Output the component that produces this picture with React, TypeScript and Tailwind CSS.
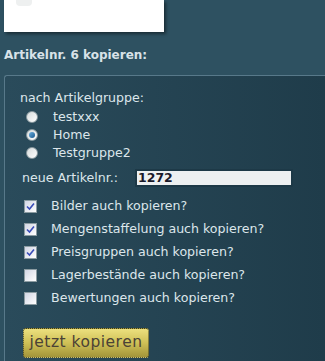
import React from "react";

const groups = [
  { label: "testxxx", checked: false },
  { label: "Home", checked: true },
  { label: "Testgruppe2", checked: false },
];

const options = [
  { label: "Bilder auch kopieren?", checked: true },
  { label: "Mengenstaffelung auch kopieren?", checked: true },
  { label: "Preisgruppen auch kopieren?", checked: true },
  { label: "Lagerbestände auch kopieren?", checked: false },
  { label: "Bewertungen auch kopieren?", checked: false },
];

function Radio({ checked }: { checked: boolean }) {
  return (
    <span className="flex h-[12px] w-[12px] items-center justify-center rounded-full border border-[#8a9aa0] bg-gradient-to-br from-[#d6dbdc] to-[#ffffff]">
      {checked && (
        <span className="h-[6px] w-[6px] rounded-full bg-gradient-to-br from-[#6ab0e0] to-[#1a5a90]" />
      )}
    </span>
  );
}

function Check({ checked }: { checked: boolean }) {
  return (
    <span className="flex h-[13px] w-[13px] items-center justify-center border border-[#8c9ca2] bg-gradient-to-br from-[#d2d6e4] to-[#ffffff]">
      {checked && (
        <svg width="9" height="9" viewBox="0 0 9 9">
          <path d="M1 4.5 L3.5 7 L8 1.5" fill="none" stroke="#3a4cb8" strokeWidth="1.6" />
        </svg>
      )}
    </span>
  );
}

export default function App() {
  return (
    <div
      className="h-[361px] w-[325px] overflow-hidden bg-[#2e5161] text-[#dce6eb]"
      style={{ fontFamily: '"DejaVu Sans", Verdana, sans-serif' }}
    >
      {/* Bildvorschau oben */}
      <div className="ml-[4px] h-[32px] w-[160px] bg-white shadow-[2px_2px_3px_rgba(0,0,0,0.45)]">
        <div className="ml-[12px] h-[6px] w-[16px] rounded-b bg-[#eef0f0]" />
      </div>

      <h2 className="ml-[4px] mt-[16px] text-[12px] font-bold leading-[14px] text-[#d8e2e8]">
        Artikelnr. 6 kopieren:
      </h2>

      <div className="ml-[4px] mt-[13px] h-[300px] rounded-tl-[3px] border-l border-t border-[#58798a] bg-gradient-to-r from-[#2a4b5b] to-[#1f3c4a] pl-[15px] pt-[14px]">
        <div className="text-[12.6px] leading-[16px]">nach Artikelgruppe:</div>
        <div className="mt-[2px] flex flex-col">
          {groups.map((g) => (
            <div key={g.label} className="flex h-[18px] items-center">
              <span className="ml-[6px] w-[27px]">
                <Radio checked={g.checked} />
              </span>
              <span className="text-[12.6px]">{g.label}</span>
            </div>
          ))}
        </div>

        <div className="mt-[7px] flex items-center">
          <span className="ml-[2px] w-[113px] text-[12.6px]">neue Artikelnr.:</span>
          <div className="flex h-[18px] w-[158px] items-center border-2 border-[#1d3947] bg-[#edf0f1] px-[1px] text-[12.5px] font-bold text-[#1a1a2a]">
            1272
          </div>
        </div>

        <div className="mt-[7px] flex flex-col">
          {options.map((o) => (
            <div key={o.label} className="flex h-[23px] items-center">
              <span className="ml-[4px] w-[27px]">
                <Check checked={o.checked} />
              </span>
              <span className="text-[12.6px]">{o.label}</span>
            </div>
          ))}
        </div>

        <button className="mt-[18px] ml-[3px] flex h-[30px] w-[126px] items-center justify-center rounded-[3px] border border-dotted border-[#3a3a20] bg-gradient-to-b from-[#ece07e] via-[#cfc056] to-[#a3953a] text-[15.5px] tracking-[0.5px] text-[#4a4236]">
          jetzt kopieren
        </button>
      </div>
    </div>
  );
}
